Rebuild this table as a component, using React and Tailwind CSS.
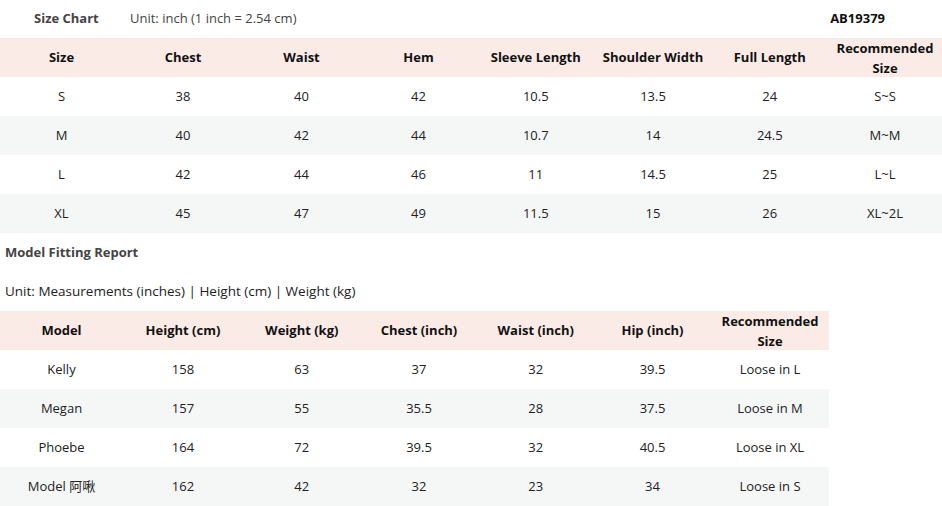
const sizeHead = ["Size", "Chest", "Waist", "Hem", "Sleeve Length", "Shoulder Width", "Full Length", "Recommended Size"];
const sizeRows = [
  ["S", "38", "40", "42", "10.5", "13.5", "24", "S~S"],
  ["M", "40", "42", "44", "10.7", "14", "24.5", "M~M"],
  ["L", "42", "44", "46", "11", "14.5", "25", "L~L"],
  ["XL", "45", "47", "49", "11.5", "15", "26", "XL~2L"],
];

const modelHead = ["Model", "Height (cm)", "Weight (kg)", "Chest (inch)", "Waist (inch)", "Hip (inch)", "Recommended Size"];
const modelRows = [
  ["Kelly", "158", "63", "37", "32", "39.5", "Loose in L"],
  ["Megan", "157", "55", "35.5", "28", "37.5", "Loose in M"],
  ["Phoebe", "164", "72", "39.5", "32", "40.5", "Loose in XL"],
  ["Model 阿啾", "162", "42", "32", "23", "34", "Loose in S"],
];

// "Recommended Size" se parte en dos líneas como en la tabla original
function Cell({ text }) {
  if (text === "Recommended Size") {
    return (
      <div className="flex flex-col items-center justify-center leading-[20px]">
        <span>Recommended</span>
        <span>Size</span>
      </div>
    );
  }
  return <div className="flex items-center justify-center whitespace-nowrap">{text}</div>;
}

function Table({ head, rows, cols }) {
  return (
    <div className="flex flex-col">
      <div className={`grid ${cols} h-[39px] bg-[#fbebe6] font-bold text-[#111]`}>
        {head.map((h) => (
          <Cell key={h} text={h} />
        ))}
      </div>
      {rows.map((r, i) => (
        <div key={i} className={`grid ${cols} h-[39px] ${i % 2 ? "bg-[#f5f7f7]" : "bg-white"}`}>
          {r.map((c, j) => (
            <Cell key={j} text={c} />
          ))}
        </div>
      ))}
    </div>
  );
}

export default function App() {
  return (
    <div className="w-[942px] h-[506px] bg-white text-[13px] text-[#222] font-['Open_Sans','Noto_Sans_CJK_SC',sans-serif] overflow-hidden">
      <div className="flex items-center h-[38px]">
        <div className="w-[130px] pl-[34px] font-bold text-[#444]">Size Chart</div>
        <div className="flex-1 text-[#444]">Unit: inch (1 inch = 2.54 cm)</div>
        <div className="pr-[57px] font-bold text-[#111]">AB19379</div>
      </div>
      <Table
        head={sizeHead}
        rows={sizeRows}
        cols="grid-cols-[123px_120px_117px_117px_117.5px_117px_116.5px_114px]"
      />
      <div className="h-[39px] flex items-center pl-[5px] font-bold text-[#444]">Model Fitting Report</div>
      <div className="h-[39px] flex items-center pl-[5px] text-[13.5px] text-[#222]">
        Unit: Measurements (inches) | Height (cm) | Weight (kg)
      </div>
      <div className="w-[829px]">
        <Table
          head={modelHead}
          rows={modelRows}
          cols="grid-cols-[123px_120px_117.5px_117px_116.5px_117px_118px]"
        />
      </div>
    </div>
  );
}
